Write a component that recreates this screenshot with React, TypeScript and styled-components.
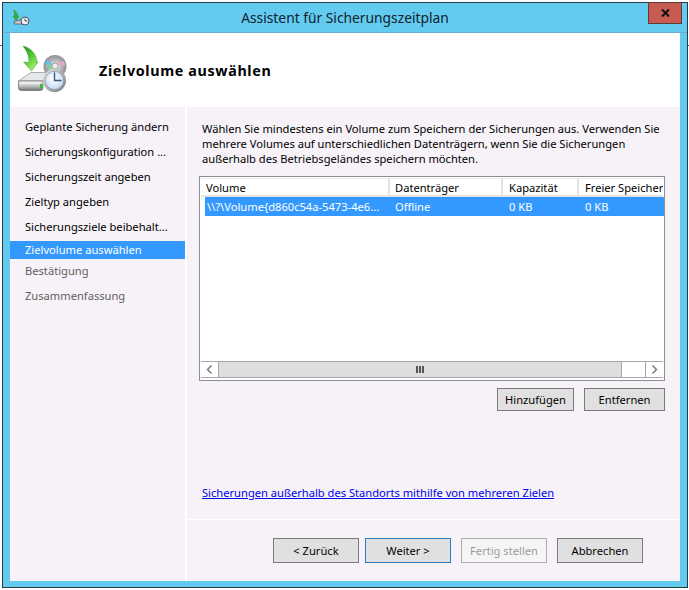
import React from "react";
import styled, { createGlobalStyle } from "styled-components";

const Global = createGlobalStyle`
  html, body { margin: 0; padding: 0; background: #fff; }
  body { font-family: "Noto Sans", "Open Sans", sans-serif; font-size: 11.15px; color: #000; }
  * { box-sizing: border-box; }
`;

const Screen = styled.div`
  position: relative;
  width: 689px;
  height: 590px;
  padding: 2px 1px 2px 2px;
  background: #fff;
  overflow: hidden;
`;

const Tick = styled.div<{ $side: "left" | "right" }>`
  position: absolute;
  top: 45px;
  ${(p) => (p.$side === "left" ? "left: 0; width: 2px;" : "right: 0; width: 1px;")}
  height: 1px;
  background: #555;
`;

const Window = styled.div`
  position: relative;
  display: flex;
  flex-direction: column;
  height: 100%;
  border: 1px solid #2d3a40;
  background: #63cbf0;
  padding: 0 7px 6px;
`;

const TitleBar = styled.div`
  position: relative;
  height: 30px;
  flex: none;
  display: flex;
  align-items: center;
  justify-content: center;
  margin: 0 -7px;
  border-bottom: 1px solid #6ea9d0;
  font-size: 13.8px;
  color: #10222c;
`;

const TitleIconWrap = styled.div`
  position: absolute;
  left: 8px;
  top: 5px;
  width: 20px;
  height: 20px;
`;

const CloseButton = styled.div`
  position: absolute;
  right: 5px;
  top: -1px;
  width: 34px;
  height: 22px;
  background: #c75b52;
  border: 1px solid #5e3b38;
  display: flex;
  align-items: center;
  justify-content: center;
`;

const Client = styled.div`
  flex: 1;
  display: flex;
  flex-direction: column;
  background: #fff;
  min-height: 0;
`;

const Header = styled.div`
  height: 74px;
  flex: none;
  display: flex;
  align-items: center;
  padding-left: 5px;
`;

const HeaderIconWrap = styled.div`
  width: 55px;
  height: 55px;
  margin-top: -1px;
`;

const Heading = styled.h1`
  margin: 1px 0 0 29px;
  font-size: 14.3px;
  font-weight: 700;
  letter-spacing: 0.65px;
  color: #000;
`;

const Body = styled.div`
  flex: 1;
  display: flex;
  gap: 2px;
  min-height: 0;
`;

const Sidebar = styled.nav`
  width: 175px;
  flex: none;
  background: #f6f2f7;
  padding-top: 7px;
  display: flex;
  flex-direction: column;
`;

const Step = styled.div<{ $state?: "active" | "muted" }>`
  height: ${(p) => (p.$state === "active" ? "18px" : "25px")};
  margin: ${(p) => (p.$state === "active" ? "2px 0 -1px" : "0")};
  padding: ${(p) => (p.$state === "active" ? "0 0 2px 15px" : "0 0 0 15px")};
  display: flex;
  align-items: center;
  white-space: nowrap;
  background: ${(p) => (p.$state === "active" ? "#3399ff" : "transparent")};
  color: ${(p) => (p.$state === "active" ? "#fff" : p.$state === "muted" ? "#5f5f5f" : "#000")};
`;

const Main = styled.main`
  flex: 1;
  display: flex;
  flex-direction: column;
  min-width: 0;
`;

const Content = styled.section`
  height: 412px;
  flex: none;
  background: #f6f2f7;
  padding: 14px 15px 0 12px;
  display: flex;
  flex-direction: column;
`;

const Description = styled.p`
  margin: 0 0 12px 3px;
  height: 43px;
  line-height: 15px;
  white-space: nowrap;
`;

const ListBox = styled.div`
  height: 205px;
  flex: none;
  border: 1px solid #8e8f94;
  background: #fff;
  padding: 1px;
  display: flex;
  flex-direction: column;
`;

const ListHead = styled.div`
  display: grid;
  grid-template-columns: 189px 113px 76px 84px;
  height: 19px;
  flex: none;
`;

const HeadCell = styled.div<{ $last?: boolean }>`
  border-top: 1px solid #f0f0f0;
  border-bottom: 2px solid #e3e3e3;
  border-right: ${(p) => (p.$last ? "0" : "2px solid #e3e3e3")};
  padding-left: 5px;
  line-height: 18px;
  white-space: nowrap;
  overflow: hidden;
  &:nth-child(n + 3) {
    padding-left: 6px;
  }
`;

const ListRow = styled.div`
  display: grid;
  grid-template-columns: 185px 113px 76px 84px;
  width: 459px;
  margin: 0 0 0 4px;
  height: 19px;
  flex: none;
  background: #3399ff;
  color: #fff;
`;

const RowCell = styled.div<{ $clip?: boolean }>`
  padding-left: ${(p) => (p.$clip ? "2px" : "5px")};
  line-height: 20px;
  white-space: nowrap;
  overflow: hidden;
  &:nth-child(n + 3) {
    padding-left: 6px;
  }
`;

const ListFill = styled.div`
  flex: 1;
`;

const ScrollBar = styled.div`
  height: 17px;
  flex: none;
  display: flex;
  width: 462px;
  margin-bottom: 1px;
  border-top: 1px solid #a6a6a6;
  border-bottom: 1px solid #a6a6a6;
`;

const ScrollArrow = styled.div`
  width: 17px;
  flex: none;
  display: flex;
  align-items: center;
  justify-content: center;
  background: #fff;
`;

const ScrollThumb = styled.div`
  width: 404px;
  flex: none;
  background: #dedede;
  border-left: 1px solid #a6a6a6;
  border-right: 1px solid #a6a6a6;
  display: flex;
  align-items: center;
  justify-content: center;
`;

const ScrollTrack = styled.div`
  flex: 1;
  background: #fff;
  border-right: 1px solid #a6a6a6;
`;

const Grip = styled.div`
  width: 8px;
  height: 7px;
  background: repeating-linear-gradient(to right, #555 0 2px, transparent 2px 3px);
`;

const ListActions = styled.div`
  display: flex;
  justify-content: flex-end;
  gap: 10px;
  margin-top: 7px;
`;

const SmallButton = styled.button<{ $w: number }>`
  width: ${(p) => p.$w}px;
  height: 23px;
  padding: 0;
  font: inherit;
  color: #000;
  background: #e0e0e0;
  border: 1px solid #7a7a7a;
`;

const Link = styled.a`
  margin: 74px 0 0 3px;
  color: #0000ee;
  text-decoration: underline;
  line-height: 16px;
  white-space: nowrap;
`;

const Divider = styled.div`
  height: 1px;
  flex: none;
  background: #fff;
`;

const Footer = styled.footer`
  flex: 1;
  background: #f6f2f7;
  display: flex;
  align-items: flex-start;
  padding: 18px 0 0 86px;
`;

const WizardButton = styled.button<{ $variant?: "default" | "disabled"; $gap?: number }>`
  width: 86px;
  height: 25px;
  padding: 0;
  margin-left: ${(p) => p.$gap ?? 0}px;
  font: inherit;
  color: ${(p) => (p.$variant === "disabled" ? "#9b9b9b" : "#000")};
  background: ${(p) => (p.$variant === "disabled" ? "#f5f5f5" : "#e0e0e0")};
  border: 1px solid
    ${(p) => (p.$variant === "disabled" ? "#adadad" : p.$variant === "default" ? "#2b7ec0" : "#7a7a7a")};
`;

const LargeIcon = () => (
  <svg width="55" height="55" viewBox="15 38 55 55">
    <defs>
      <linearGradient id="arrowG" x1="0" y1="0" x2="0.6" y2="1">
        <stop offset="0" stopColor="#1c8a1c" />
        <stop offset="0.55" stopColor="#58c83a" />
        <stop offset="1" stopColor="#a8ee70" />
      </linearGradient>
      <linearGradient id="diskG" x1="0" y1="0" x2="0" y2="1">
        <stop offset="0" stopColor="#f2f2f2" />
        <stop offset="0.5" stopColor="#c4c6c8" />
        <stop offset="1" stopColor="#6c6e70" />
      </linearGradient>
      <radialGradient id="cdG" cx="0.5" cy="0.5" r="0.55">
        <stop offset="0" stopColor="#f4f4f4" />
        <stop offset="0.5" stopColor="#b8b8bc" />
        <stop offset="1" stopColor="#87878b" />
      </radialGradient>
      <radialGradient id="faceG" cx="0.45" cy="0.4" r="0.7">
        <stop offset="0" stopColor="#ffffff" />
        <stop offset="0.7" stopColor="#cfe2f2" />
        <stop offset="1" stopColor="#8fb3d3" />
      </radialGradient>
      <linearGradient id="rimG" x1="0" y1="0" x2="1" y2="1">
        <stop offset="0" stopColor="#e8e8e8" />
        <stop offset="1" stopColor="#77797c" />
      </linearGradient>
    </defs>
    <circle cx="55" cy="62.5" r="11.5" fill="url(#cdG)" />
    <path d="M46 59 L53 62 L49 67 Z" fill="#7fd0a0" />
    <path d="M44.5 60 L47 56 L53 61 Z" fill="#58c4e8" />
    <path d="M57 60 L64 57 L65 62 Z" fill="#e7a8c8" />
    <circle cx="55" cy="62" r="3" fill="#eee" stroke="#8a8a8e" strokeWidth="0.7" />
    <path d="M23 42 C31 44 37 50 37 59 L37 58 L38 58 L31.5 67 L23.5 58 L29 58.5 C29 52 27 47 23 42 Z" fill="url(#arrowG)" stroke="#3d9f2c" strokeWidth="0.5" />
    <path d="M18.5 77 L31 68.5 L46 68.5 L43 77 Z" fill="#e6e7e8" stroke="#8c8d90" strokeWidth="0.7" />
    <path d="M18.5 77 L43 77 L43 84 Q43 86.5 40 86.5 L21.5 86.5 Q18.5 86.5 18.5 84 Z" fill="url(#diskG)" stroke="#66686a" strokeWidth="0.7" />
    <path d="M21 79 H40" stroke="#fff" strokeWidth="1.2" opacity="0.8" />
    <rect x="40" y="80" width="2.6" height="4.5" fill="#2fbf2f" />
    <circle cx="54.5" cy="76.5" r="11.5" fill="url(#rimG)" />
    <circle cx="54.5" cy="76.5" r="9.2" fill="url(#faceG)" stroke="#7c8fa0" strokeWidth="0.6" />
    <path d="M54.5 68.5 V76.5 H61.5" fill="none" stroke="#33587c" strokeWidth="1.4" />
  </svg>
);

const SmallIcon = () => (
  <svg width="20" height="20" viewBox="10 8 20 20">
    <path d="M12.5 10 C15 11 16.5 13.5 16.5 16 L18 16 L15 20.5 L12 16 L13.8 16 C13.8 14 13.4 12 12.5 10 Z" fill="#3bb02e" stroke="#1f7d1a" strokeWidth="0.4" />
    <path d="M13 21.5 L21 19.5 L21 24 L13.5 24 Z" fill="#c9cbcd" stroke="#55575a" strokeWidth="0.8" />
    <circle cx="24" cy="21" r="4" fill="#eef4fa" stroke="#4d5357" strokeWidth="1" />
    <path d="M24 18.5 V21 H26.5" fill="none" stroke="#33404a" strokeWidth="0.9" />
  </svg>
);

const Chevron = ({ dir }: { dir: "left" | "right" }) => (
  <svg width="7" height="9" viewBox="0 0 7 9">
    <path
      d={dir === "left" ? "M5.5 0.5 L1.5 4.5 L5.5 8.5" : "M1.5 0.5 L5.5 4.5 L1.5 8.5"}
      fill="none"
      stroke="#6e6e6e"
      strokeWidth="1.3"
    />
  </svg>
);

const steps: { label: string }[] = [
  { label: "Geplante Sicherung ändern" },
  { label: "Sicherungskonfiguration ..." },
  { label: "Sicherungszeit angeben" },
  { label: "Zieltyp angeben" },
  { label: "Sicherungsziele beibehalt..." },
];

export default function App() {
  return (
    <Screen>
      <Global />
      <Tick $side="left" />
      <Tick $side="right" />
      <Window>
        <TitleBar>
          <TitleIconWrap>
            <SmallIcon />
          </TitleIconWrap>
          Assistent für Sicherungszeitplan
          <CloseButton>
            <svg width="9" height="8" viewBox="0 0 9 8">
              <path d="M1 0.5 L8 7.5 M8 0.5 L1 7.5" stroke="#111" strokeWidth="2" />
            </svg>
          </CloseButton>
        </TitleBar>
        <Client>
          <Header>
            <HeaderIconWrap>
              <LargeIcon />
            </HeaderIconWrap>
            <Heading>Zielvolume auswählen</Heading>
          </Header>
          <Body>
            <Sidebar>
              {steps.map((s) => (
                <Step key={s.label}>{s.label}</Step>
              ))}
              <Step $state="active">Zielvolume auswählen</Step>
              <Step $state="muted">Bestätigung</Step>
              <Step $state="muted">Zusammenfassung</Step>
            </Sidebar>
            <Main>
              <Content>
                <Description>
                  Wählen Sie mindestens ein Volume zum Speichern der Sicherungen aus. Verwenden Sie
                  <br />
                  mehrere Volumes auf unterschiedlichen Datenträgern, wenn Sie die Sicherungen
                  <br />
                  außerhalb des Betriebsgeländes speichern möchten.
                </Description>
                <ListBox>
                  <ListHead>
                    <HeadCell>Volume</HeadCell>
                    <HeadCell>Datenträger</HeadCell>
                    <HeadCell>Kapazität</HeadCell>
                    <HeadCell $last>Freier Speicherplatz</HeadCell>
                  </ListHead>
                  <ListRow>
                    <RowCell $clip>{"\\\\?\\Volume{d860c54a-5473-4e6..."}</RowCell>
                    <RowCell>Offline</RowCell>
                    <RowCell>0 KB</RowCell>
                    <RowCell>0 KB</RowCell>
                  </ListRow>
                  <ListFill />
                  <ScrollBar>
                    <ScrollArrow>
                      <Chevron dir="left" />
                    </ScrollArrow>
                    <ScrollThumb>
                      <Grip />
                    </ScrollThumb>
                    <ScrollTrack />
                    <ScrollArrow>
                      <Chevron dir="right" />
                    </ScrollArrow>
                  </ScrollBar>
                </ListBox>
                <ListActions>
                  <SmallButton $w={77}>Hinzufügen</SmallButton>
                  <SmallButton $w={81}>Entfernen</SmallButton>
                </ListActions>
                <Link href="#">Sicherungen außerhalb des Standorts mithilfe von mehreren Zielen</Link>
              </Content>
              <Divider />
              <Footer>
                <WizardButton>&lt; Zurück</WizardButton>
                <WizardButton $variant="default" $gap={6}>
                  Weiter &gt;
                </WizardButton>
                <WizardButton $variant="disabled" $gap={10}>
                  Fertig stellen
                </WizardButton>
                <WizardButton $gap={10}>Abbrechen</WizardButton>
              </Footer>
            </Main>
          </Body>
        </Client>
      </Window>
    </Screen>
  );
}
